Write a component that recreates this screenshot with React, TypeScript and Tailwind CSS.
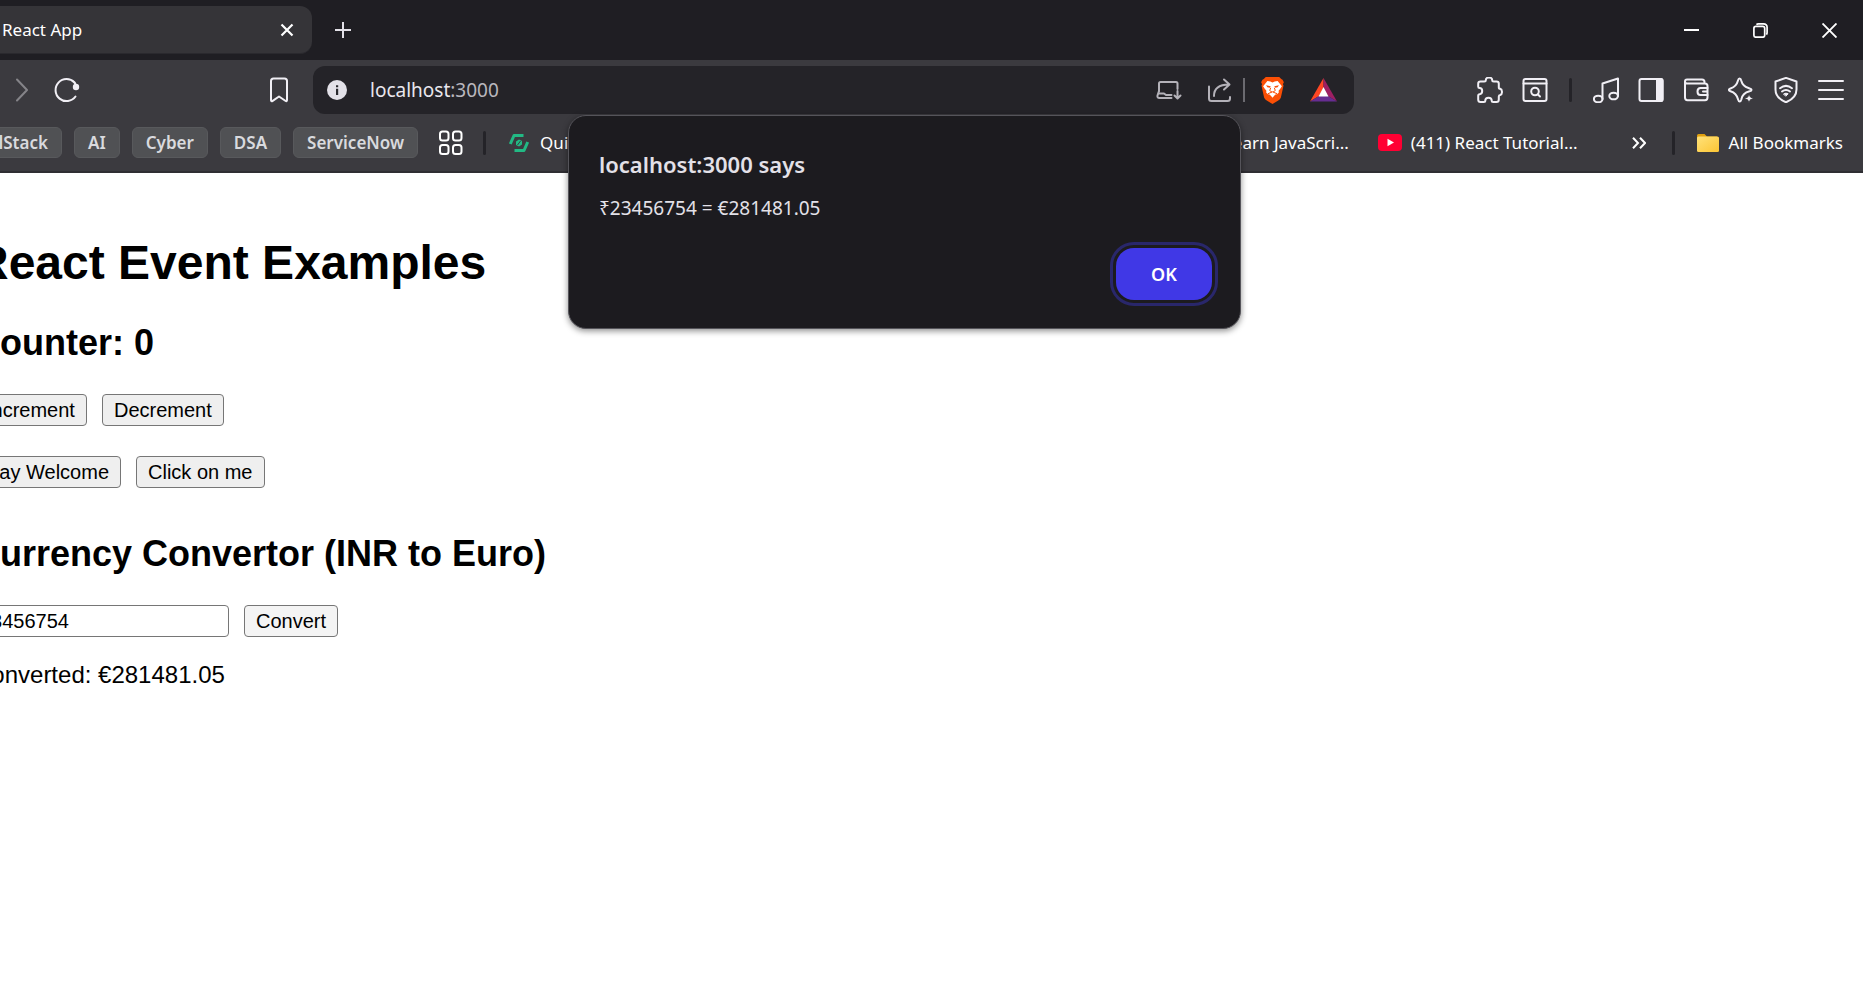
import { useState } from "react";
import type { ReactNode } from "react";

const RATE = 0.012;

function IconButton({ label, className = "", children }: { label: string; className?: string; children: ReactNode }) {
  return (
    <button type="button" aria-label={label} className={`flex shrink-0 items-center justify-center ${className}`}>
      {children}
    </button>
  );
}

function Line({ size = 26, width = 2, children }: { size?: number; width?: number; children: ReactNode }) {
  return (
    <svg
      width={size}
      height={size}
      viewBox={`0 0 ${size} ${size}`}
      fill="none"
      stroke="currentColor"
      strokeWidth={width}
      strokeLinecap="round"
      strokeLinejoin="round"
      aria-hidden="true"
    >
      {children}
    </svg>
  );
}

function TabStrip() {
  return (
    <header className="flex h-[60px] items-center justify-between bg-[#1f1e23] text-white">
      <div className="flex items-center">
        <div className="flex h-12 w-[312px] items-center justify-between rounded-r-xl border-b border-[#2a292e] bg-[#353438] pr-[18px] pl-[2px]">
          <span className="text-[17px] leading-6">React App</span>
          <IconButton label="Close tab">
            <svg width="14" height="14" viewBox="0 0 14 14" stroke="currentColor" strokeWidth="2.2" aria-hidden="true">
              <path d="M1.5 1.5 12.5 12.5M12.5 1.5 1.5 12.5" />
            </svg>
          </IconButton>
        </div>
        <IconButton label="New tab" className="ml-[23px]">
          <svg width="16" height="16" viewBox="0 0 16 16" stroke="#e3e1e8" strokeWidth="2" aria-hidden="true">
            <path d="M8 0V16M0 8H16" />
          </svg>
        </IconButton>
      </div>
      <div className="flex items-center gap-[54px] pr-[26px]">
        <IconButton label="Minimize">
          <svg width="15" height="15" viewBox="0 0 15 15" aria-hidden="true">
            <path d="M0 6h15v2H0z" fill="#fff" />
          </svg>
        </IconButton>
        <IconButton label="Restore">
          <svg width="15" height="15" viewBox="0 0 15 15" fill="none" stroke="#fff" strokeWidth="1.7" aria-hidden="true">
            <rect x="0.9" y="3.4" width="10.8" height="10.8" rx="2" />
            <path d="M3.4 1.6Q4.2 .9 5.4 .9H10.4Q14.1 .9 14.1 4.6V9.6Q14.1 10.8 13.4 11.6" />
          </svg>
        </IconButton>
        <IconButton label="Close window">
          <svg width="15" height="15" viewBox="0 0 15 15" stroke="#fff" strokeWidth="1.9" aria-hidden="true">
            <path d="M.5 .5 14.5 14.5M14.5 .5 .5 14.5" />
          </svg>
        </IconButton>
      </div>
    </header>
  );
}

function BraveLogo() {
  return (
    <svg width="23" height="27" viewBox="0 0 69 82" aria-hidden="true">
      <path
        d="M14 0H55L61 6 65 8 69 16 66 22 68 26 60 62Q58 68 52 71L34.500 82 17 71Q11 68 9 62L1 26 3 22 0 16 4 8 8 6z"
        fill="#fb4f05"
      />
      <path
        d="M19 12 28 14 34.500 17 41 14 50 12 63 28 57 37Q51 41 54 46 50 54 43 53L34.500 63 26 53Q19 54 15 46 18 41 12 37L6 28z"
        fill="#fff"
      />
      <path d="M15 25 29 28 27 33 19 31zM54 25 40 28 42 33 50 31z" fill="#fb4f05" />
      <path d="M29 33 26 41 33 46M40 33 43 41 36 46M20 51 34.500 45 49 51" fill="none" stroke="#fb4f05" strokeWidth="3" />
    </svg>
  );
}

function AddressBar() {
  return (
    <div className="flex h-12 min-w-0 flex-1 items-center rounded-xl bg-[#242328] pr-[17px] pl-[14px]">
      <IconButton label="Site information">
        <svg width="20" height="20" viewBox="0 0 20 20" aria-hidden="true">
          <circle cx="10" cy="10" r="10" fill="#e3e1e8" />
          <path d="M9 5.2h2.2v2H9zM9 8.7h2.2v6.3H9z" fill="#29282d" />
        </svg>
      </IconButton>
      <a href="http://localhost:3000" className="ml-[23px] text-[19px] leading-6 text-[#e9e7ee]">
        localhost<span className="text-[#b9b7be]">:3000</span>
      </a>
      <div className="ml-auto flex items-center text-[#b4b2b9]">
        <IconButton label="Install app">
          <Line>
            <path d="M3 14V6.5Q3 5 4.500 5H20Q21.500 5 21.500 6.500V12" />
            <path d="M3 14 1.500 18.500Q1 21 3.500 21H15.500" />
            <path d="M3 16.500H8L10 18H15.500" />
            <path d="M21.500 14V21M18.500 18.500 21.500 21.500 24.500 18.500" />
          </Line>
        </IconButton>
        <IconButton label="Share" className="ml-[25px]">
          <Line>
            <path d="M2 9.500V21.500Q2 24 4.500 24H20.500Q23 24 23 21.500V20" />
            <path d="M7 19C7 11 12 7.500 22 7.500M17 2.500 22.500 7.500 17 12.500" />
          </Line>
        </IconButton>
        <span className="ml-[10px] h-6 w-[2px] bg-[#6b6a70]" />
        <IconButton label="Brave Shields" className="ml-4">
          <BraveLogo />
        </IconButton>
        <IconButton label="Brave Rewards" className="ml-[26px]">
          <svg width="27" height="24" viewBox="0 0 27 24" aria-hidden="true">
            <path d="M13.500 0 0 23.500 9 18 13.500 9.500z" fill="#ff4724" />
            <path d="M13.500 0 27 23.500 18 18 13.500 9.500z" fill="#9e1f63" />
            <path d="M0 23.500H27L18 18H9z" fill="#662d91" />
            <path d="M13.500 9 8.500 18.500H18.500z" fill="#fff" />
          </svg>
        </IconButton>
      </div>
    </div>
  );
}

function Toolbar() {
  return (
    <div className="flex h-[60px] items-center pr-[19px] text-[#f1eff5]">
      <div className="flex w-[313px] shrink-0 items-center pr-6 pl-4">
        <IconButton label="Forward" className="text-[#858489]">
          <svg width="12" height="24" viewBox="0 0 12 24" fill="none" stroke="currentColor" strokeWidth="2" strokeLinecap="round" strokeLinejoin="round" aria-hidden="true">
            <path d="M1 1.500 11 12 1 22.500" />
          </svg>
        </IconButton>
        <IconButton label="Reload" className="ml-[26px]">
          <Line>
            <path d="M20.500 5.500A11 11 0 1 0 21.500 19.500" />
            <circle cx="22" cy="10" r="3.200" fill="currentColor" stroke="none" />
            <path d="M20.500 5.500 22.500 9" />
          </Line>
        </IconButton>
        <IconButton label="Bookmark this page" className="ml-auto">
          <svg width="20" height="26" viewBox="0 0 20 26" fill="none" stroke="currentColor" strokeWidth="2" strokeLinejoin="round" aria-hidden="true">
            <path d="M2 4Q2 1.500 4.500 1.500H15.500Q18 1.500 18 4V23Q18 25 16.300 23.800L10 19.500 3.700 23.800Q2 25 2 23z" />
          </svg>
        </IconButton>
      </div>
      <AddressBar />
      <div className="ml-[123px] flex shrink-0 items-center gap-[19px]">
        <IconButton label="Extensions">
          <Line>
            <path d="M3.500 4.500H7.200Q8.800 4.500 8.800 3A3.200 2.400 0 0 1 15.200 3Q15.200 4.500 16.800 4.500H19.500Q21.800 4.500 21.800 6.800V10.200Q21.800 11.800 23.200 11.800A2.400 3.200 0 0 1 23.200 18Q21.800 18 21.800 19.500V22.500Q21.800 25 19.500 25H16.200Q14.700 25 14.700 23.500A3.200 2.800 0 0 0 8.300 23.500Q8.300 25 6.800 25H3.500Q1.200 25 1.200 22.500V18.800Q1.200 17.200 2.600 17.200A2.600 3.100 0 0 0 2.600 11Q1.200 11 1.200 9.500V6.800Q1.200 4.500 3.500 4.500z" />
          </Line>
        </IconButton>
        <IconButton label="Search tabs">
          <Line>
            <rect x="1.500" y="2" width="23" height="22" rx="2" />
            <path d="M1.500 6.500H24.500" />
            <circle cx="13" cy="14.500" r="3.800" />
            <path d="M16 17.500 18 19.500" />
          </Line>
        </IconButton>
        <span className="mx-[2px] h-6 w-[3px] rounded-sm bg-[#242328]" />
        <IconButton label="Playlist">
          <Line>
            <path d="M9.500 22V6.500L25 1.500V19" />
            <ellipse cx="5.200" cy="22" rx="4.300" ry="3.300" />
            <ellipse cx="20.600" cy="19" rx="4.300" ry="3.300" />
          </Line>
        </IconButton>
        <IconButton label="Sidebar">
          <Line>
            <rect x="1.500" y="2" width="23" height="22" rx="2" />
            <path d="M19 2H23Q24.500 2 24.500 3.500V22.500Q24.500 24 23 24H19z" fill="currentColor" />
          </Line>
        </IconButton>
        <IconButton label="Wallet">
          <Line>
            <path d="M2 4.500V20.500Q2 23.200 4.500 23.200H22Q24.500 23.200 24.500 20.500V9Q24.500 6.500 22 6.500H4Q2 6.500 2 4.500 2 2.500 4 2.500H19Q21.500 2.500 21.500 5V6.500" />
            <path d="M24.500 11H17.500Q14.500 11 14.500 14.500 14.500 18 17.500 18H24.500M24 14.500H20" />
          </Line>
        </IconButton>
        <IconButton label="Leo AI">
          <Line>
            <path d="M11.500 1.500Q12.800 1.500 13.200 3.500 14.500 9 20.500 11 23.500 12 23.500 13 23.500 14 21.500 14.300 14.500 16 13.300 22.500 12.800 24.500 11.700 24.500 10.600 24.500 10.100 22.500 8.500 16 2.500 14.200 .9 13.700 .9 12.800 .9 12 2.500 11.500 8.500 9.500 10 3.500 10.500 1.500 11.500 1.500z" />
            <path d="M21 16.500 22.400 20 25.800 21.400 22.400 22.800 21 26 19.600 22.800 16 21.400 19.600 20z" fill="currentColor" stroke="#3b3a3f" strokeWidth="1" />
          </Line>
        </IconButton>
        <IconButton label="VPN">
          <Line>
            <path d="M13 .9 23.500 4.500V12.500Q23.500 21 13 25.300 2.500 21 2.500 12.500V4.500z" />
            <path d="M7 11.200Q13 6.500 19 11.200M9 14.500Q13 11.500 17 14.500" />
            <path d="M10.800 16.800Q13 15.400 15.200 16.800L13 19z" fill="currentColor" strokeWidth="1" />
          </Line>
        </IconButton>
        <IconButton label="Menu">
          <Line>
            <path d="M1 4H25M1 13H25M1 22H25" />
          </Line>
        </IconButton>
      </div>
    </div>
  );
}

const folders = ["AI", "Cyber", "DSA", "ServiceNow"];

function FolderPill({ name }: { name: string }) {
  return (
    <a href="#" className="flex h-[31px] shrink-0 items-center rounded-md border border-[#58595c] bg-[#505154] px-[13px] text-[17px] leading-6 font-semibold text-[#d9dade]">
      {name}
    </a>
  );
}

function Divider() {
  return <span className="h-6 w-[3px] shrink-0 rounded-sm bg-[#242328]" />;
}

function BookmarksBar() {
  return (
    <nav aria-label="Bookmarks" className="flex h-[53px] items-start justify-between border-b-2 border-[#2f2e33] pt-[7px] pr-[20px] text-white">
      <div className="flex items-center gap-3">
        <div className="flex w-[62px] justify-end overflow-hidden">
          <FolderPill name="FullStack" />
        </div>
        {folders.map((name) => (
          <FolderPill key={name} name={name} />
        ))}
        <IconButton label="Apps" className="ml-[8px]">
          <Line>
            <rect x="2" y="1.500" width="8.500" height="9" rx="2.500" />
            <rect x="15" y="1.500" width="8.500" height="9" rx="2.500" />
            <rect x="2" y="15" width="8.500" height="9" rx="2.500" />
            <rect x="15" y="15" width="8.500" height="9" rx="2.500" />
          </Line>
        </IconButton>
        <span className="ml-[7px] flex">
          <Divider />
        </span>
        <a href="#" className="ml-[11px] flex items-center gap-[11px] text-[17px] leading-6">
          <svg width="20" height="20" viewBox="0 0 20 20" fill="none" stroke="#22b984" strokeWidth="3" strokeLinejoin="round" aria-hidden="true">
            <path d="M1.300 11 5 2.500H14.500M18.700 9 15 17.500H5.500" />
            <path d="M10 6.500 13 8v3.500L10 13.500 7 12V8.500z" fill="#22b984" stroke="none" />
            <path d="M8.500 12 11.500 8" stroke="#3b3a3f" strokeWidth="1" />
          </svg>
          Qui
        </a>
      </div>
      <div className="flex h-[31px] items-center text-[17px] leading-6">
        <a href="#">Learn JavaScri...</a>
        <a href="#" className="ml-[29px] flex items-center gap-[9px]">
          <svg width="24" height="17" viewBox="0 0 24 17" aria-hidden="true">
            <rect width="24" height="17" rx="4" fill="#ff0033" />
            <path d="M9.500 4.800 16 8.500 9.500 12.200z" fill="#fff" />
          </svg>
          (411) React Tutorial...
        </a>
        <IconButton label="More bookmarks" className="ml-[54px]">
          <svg width="14" height="12" viewBox="0 0 14 12" fill="none" stroke="currentColor" strokeWidth="2" aria-hidden="true">
            <path d="M1 .8 6 6 1 11.200M8 .8 13 6 8 11.200" />
          </svg>
        </IconButton>
        <span className="ml-[26px] flex">
          <Divider />
        </span>
        <a href="#" className="ml-[22px] flex items-center gap-[10px]">
          <svg width="22" height="18" viewBox="0 0 22 18" aria-hidden="true">
            <defs>
              <linearGradient id="folder" x1="0" y1="0" x2="1" y2="1">
                <stop offset="0" stopColor="#ffe27a" />
                <stop offset="1" stopColor="#fcc534" />
              </linearGradient>
            </defs>
            <path d="M0 3V1.500Q0 0 1.500 0H7.500L10 2.500H20V6H0z" fill="#e0a010" />
            <rect y="2.500" width="22" height="15.500" rx="1.500" fill="url(#folder)" />
          </svg>
          All Bookmarks
        </a>
      </div>
    </nav>
  );
}

function AlertDialog({ onClose }: { onClose: () => void }) {
  return (
    <div
      role="alertdialog"
      aria-labelledby="alert-title"
      aria-describedby="alert-text"
      className="absolute top-[115px] left-[568px] flex w-[673px] flex-col rounded-[18px] border border-[#55545a] bg-[#1c1b1f] px-[30px] pt-[32px] pb-[28px] text-[#e3e1e8] shadow-[0_2px_6px_rgba(0,0,0,0.45)]"
    >
      <h2 id="alert-title" className="text-[22px] leading-8 font-semibold">
        localhost:3000 says
      </h2>
      <p id="alert-text" className="mt-[14px] text-[19px] leading-7">
        ₹23456754 = €281481.05
      </p>
      <button
        type="button"
        onClick={onClose}
        className="mt-[26px] mr-[-2px] h-[52px] w-24 self-end rounded-[18px] bg-[#4038e6] text-[18px] font-semibold text-white outline-3 outline-offset-3 outline-[#29276b]"
      >
        OK
      </button>
    </div>
  );
}

const control = "h-8 rounded border border-[#767676] text-[20px] leading-6";
const pageButton = `${control} bg-[#efefef] px-[11px]`;

function EventExamples() {
  const [count, setCount] = useState(0);
  const [rupees, setRupees] = useState("23456754");
  const [euros, setEuros] = useState("281481.05");

  return (
    <main className="-ml-[26px] flex-1 pt-[62px] font-['Liberation_Sans',Arial,sans-serif] text-black">
      <h1 className="text-5xl leading-[56px] font-bold">React Event Examples</h1>
      <h2 className="mt-8 text-4xl leading-10 font-bold">Counter: {count}</h2>
      <div className="mt-[31px] flex gap-[15px]">
        <button type="button" className={pageButton} onClick={() => setCount(count + 1)}>
          Increment
        </button>
        <button type="button" className={pageButton} onClick={() => setCount(count - 1)}>
          Decrement
        </button>
      </div>
      <div className="mt-[30px] flex gap-[15px]">
        <button type="button" className={pageButton}>
          Say Welcome
        </button>
        <button type="button" className={pageButton}>
          Click on me
        </button>
      </div>
      <h2 className="mt-[46px] text-4xl leading-10 font-bold">Currency Convertor (INR to Euro)</h2>
      <form
        className="mt-[31px] flex gap-[15px]"
        onSubmit={(e) => {
          e.preventDefault();
          setEuros((Number(rupees) * RATE).toFixed(2));
        }}
      >
        <input
          aria-label="Amount in INR"
          inputMode="numeric"
          value={rupees}
          onChange={(e) => setRupees(e.target.value)}
          className={`${control} w-[255px] bg-white px-[5px]`}
        />
        <button type="submit" className={`${control} border-[#8f8f8f] bg-[#f4f4f4] px-[11px]`}>
          Convert
        </button>
      </form>
      <p className="mt-6 text-2xl leading-7">Converted: €{euros}</p>
    </main>
  );
}

export default function App() {
  const [open, setOpen] = useState(true);
  return (
    <div className="relative flex min-h-screen flex-col overflow-hidden bg-white font-['Noto_Sans','Open_Sans',sans-serif]">
      <TabStrip />
      <div className="bg-[#3b3a3f]">
        <Toolbar />
        <BookmarksBar />
      </div>
      <EventExamples />
      {open && <AlertDialog onClose={() => setOpen(false)} />}
    </div>
  );
}
